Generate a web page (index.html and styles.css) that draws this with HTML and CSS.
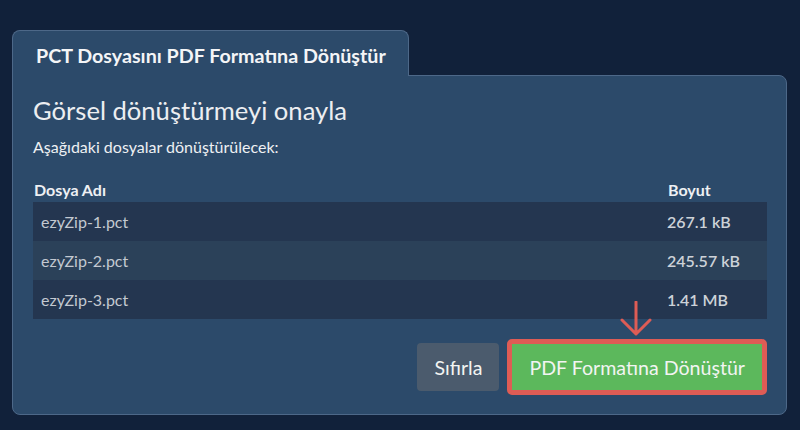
FILE: index.html
```html
<!DOCTYPE html>
<html lang="tr">
<head>
    <meta charset="UTF-8">
    <meta name="viewport" content="width=device-width, initial-scale=1.0">
    <title>PCT Dosyasını PDF Formatına Dönüştür</title>
    <link rel="stylesheet" href="styles.css">
</head>
<body>

<div class="converter">
    <div class="tab">PCT Dosyasını PDF Formatına Dönüştür</div>

    <div class="panel">
        <h2>Görsel dönüştürmeyi onayla</h2>
        <p class="intro">Aşağıdaki dosyalar dönüştürülecek:</p>

        <div class="file-table">
            <div class="head">Dosya Adı</div>
            <div class="head">Boyut</div>

            <div class="cell name">ezyZip-1.pct</div>
            <div class="cell size">267.1 kB</div>

            <div class="cell name alt">ezyZip-2.pct</div>
            <div class="cell size alt">245.57 kB</div>

            <div class="cell name">ezyZip-3.pct</div>
            <div class="cell size">1.41 MB</div>
        </div>

        <div class="actions">
            <button class="btn reset">Sıfırla</button>
            <button class="btn convert">
                PDF Formatına Dönüştür
                <svg class="hint-arrow" width="32" height="36" viewBox="0 0 32 36">
                    <path d="M16 1 V33 M2 19 L16 33 L30 19" fill="none" stroke="#de5c55" stroke-width="3" stroke-linecap="round" stroke-linejoin="round"/>
                </svg>
            </button>
        </div>
    </div>
</div>

</body>
</html>
```

FILE: styles.css
```css
body {
    font-family: Lato, 'Open Sans', sans-serif;
    background-color: #11213a;
    margin: 0;
    padding: 30px 13px 0 12px;
    color: #eef0f3;
}
.tab {
    position: relative;
    z-index: 1;
    width: 397px;
    box-sizing: border-box;
    margin-bottom: -1px;
    padding: 13px 8px 9px 23px;
    background-color: #2c4a6a;
    border: 1px solid #4d6888;
    border-bottom: none;
    border-radius: 8px 8px 0 0;
    font-size: 19.7px;
    line-height: 23px;
    font-weight: bold;
    color: #f4f5f7;
    white-space: nowrap;
}
.panel {
    background-color: #2c4a6a;
    border: 1px solid #4d6888;
    border-radius: 0 8px 8px 8px;
    padding: 19px 19px 19px 20px;
}
h2 {
    margin: 0;
    font-size: 25.6px;
    font-weight: normal;
    line-height: 31px;
    color: #eceef1;
}
.intro {
    margin: 11px 0 0;
    font-size: 16px;
    line-height: 19px;
}
.file-table {
    display: grid;
    grid-template-columns: 1fr 100px;
    margin-top: 24px;
    font-size: 16px;
    line-height: 19px;
}
.head {
    font-weight: bold;
    padding: 0 0 3px 1px;
}
.cell {
    background-color: #243650;
    padding: 10px 0;
    color: #c3c9d1;
}
.cell.alt {
    background-color: #2b4159;
}
.cell.name {
    padding-left: 8px;
}
.cell.size {
    font-weight: 600;
    color: #cdd2d8;
}
.actions {
    display: flex;
    justify-content: flex-end;
    align-items: center;
    gap: 8px;
    margin-top: 20px;
}
.btn {
    font-family: Lato, 'Open Sans', sans-serif;
    font-size: 19.6px;
    color: #f2f4f2;
    border-radius: 4px;
    cursor: pointer;
}
.reset {
    height: 48px;
    padding: 0 17px;
    border: none;
    background-color: #4b5b6d;
}
.convert {
    position: relative;
    height: 56px;
    padding: 0 17px;
    border: 5px solid #de5c55;
    border-radius: 5px;
    background-color: #5cb85c;
}
.hint-arrow {
    position: absolute;
    left: 108px;
    top: -43px;
}
```
